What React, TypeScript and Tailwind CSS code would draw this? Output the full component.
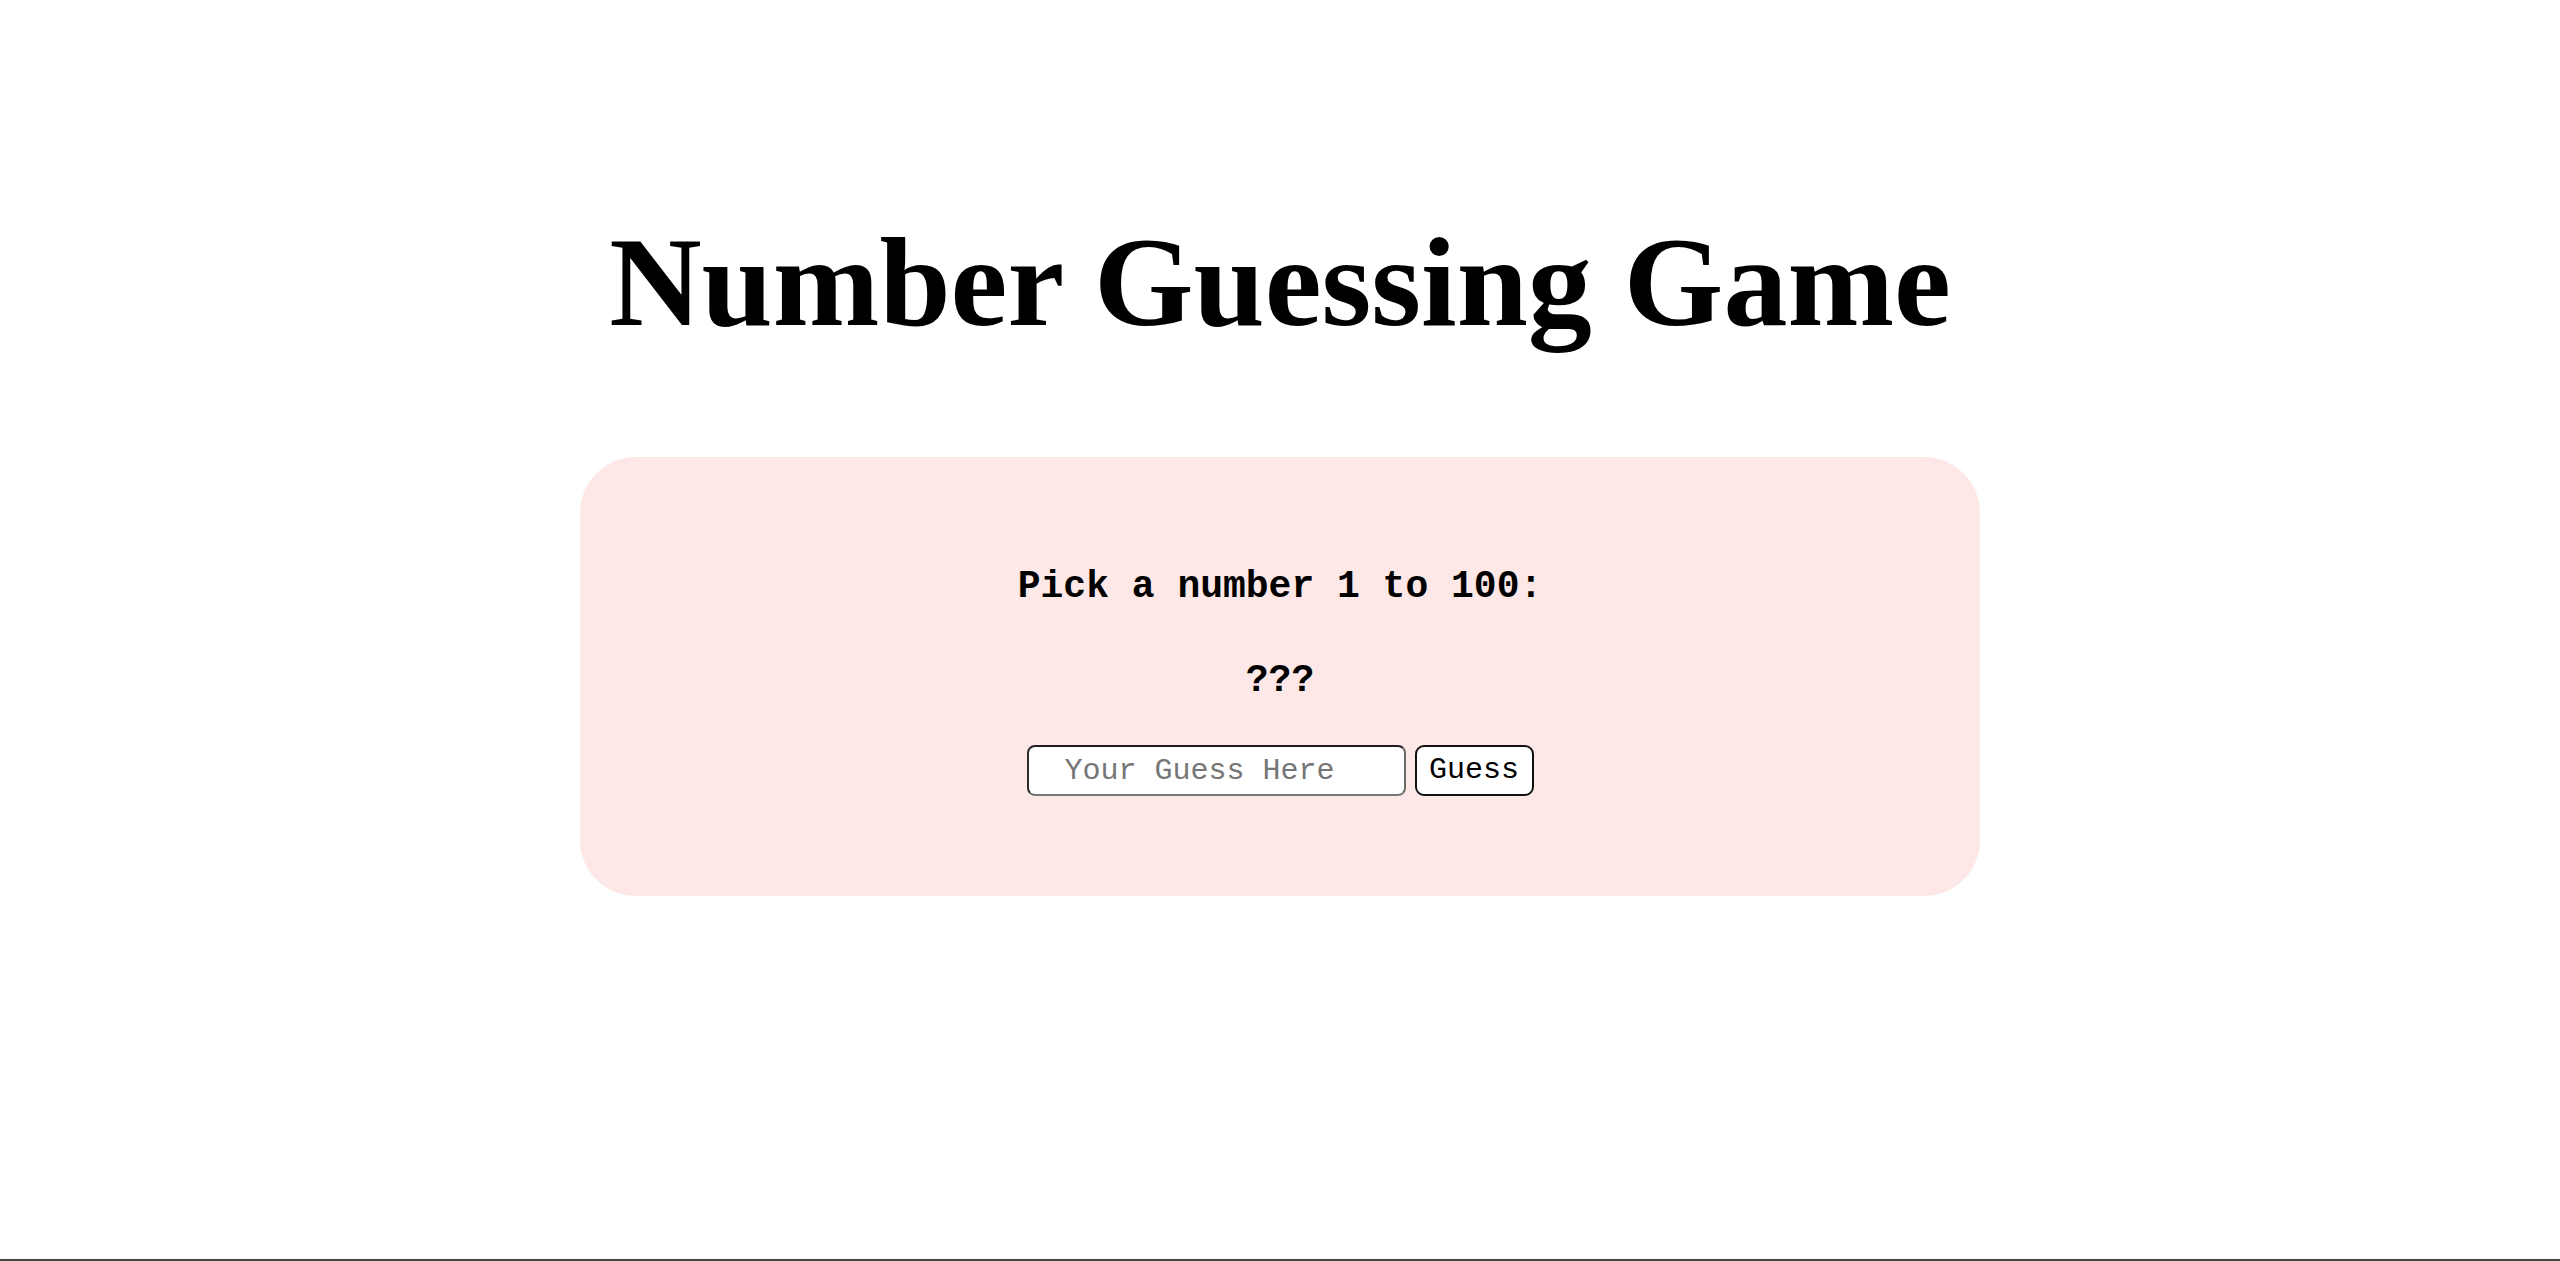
const App = () => {
  return (
    <div className="h-screen flex flex-col bg-white overflow-hidden">
      <main className="flex-1 flex flex-col items-center pt-[218px]">
        <h1 className="font-['Liberation_Serif',serif] font-bold text-[128px] leading-none text-black">
          Number Guessing Game
        </h1>

        <div className="mt-[111px] w-[1400px] h-[439px] rounded-[56px] bg-[#fde8e7] flex flex-col items-center pt-[111px] font-['Liberation_Mono',monospace]">
          <p className="text-[38px] leading-none font-bold text-black">Pick a number 1 to 100:</p>
          <p className="mt-[56px] text-[38px] leading-none font-bold text-black">???</p>
          <div className="mt-[45px] flex items-center gap-[9px]">
            <input
              type="text"
              placeholder="Your Guess Here"
              className="w-[379px] h-[51px] rounded-lg border-2 border-t-[#1f1f1f] border-l-[#2a2a2a] border-r-[#6a6a6a] border-b-[#767676] bg-white pl-[36px] text-[30px] text-black placeholder:text-[#767676] outline-none"
            />
            <button className="w-[119px] h-[51px] rounded-[9px] border-2 border-[#111111] bg-white text-[30px] text-black">
              Guess
            </button>
          </div>
        </div>
      </main>
      <div className="h-[2px] bg-[#454545]" />
    </div>
  );
};

export default App;
